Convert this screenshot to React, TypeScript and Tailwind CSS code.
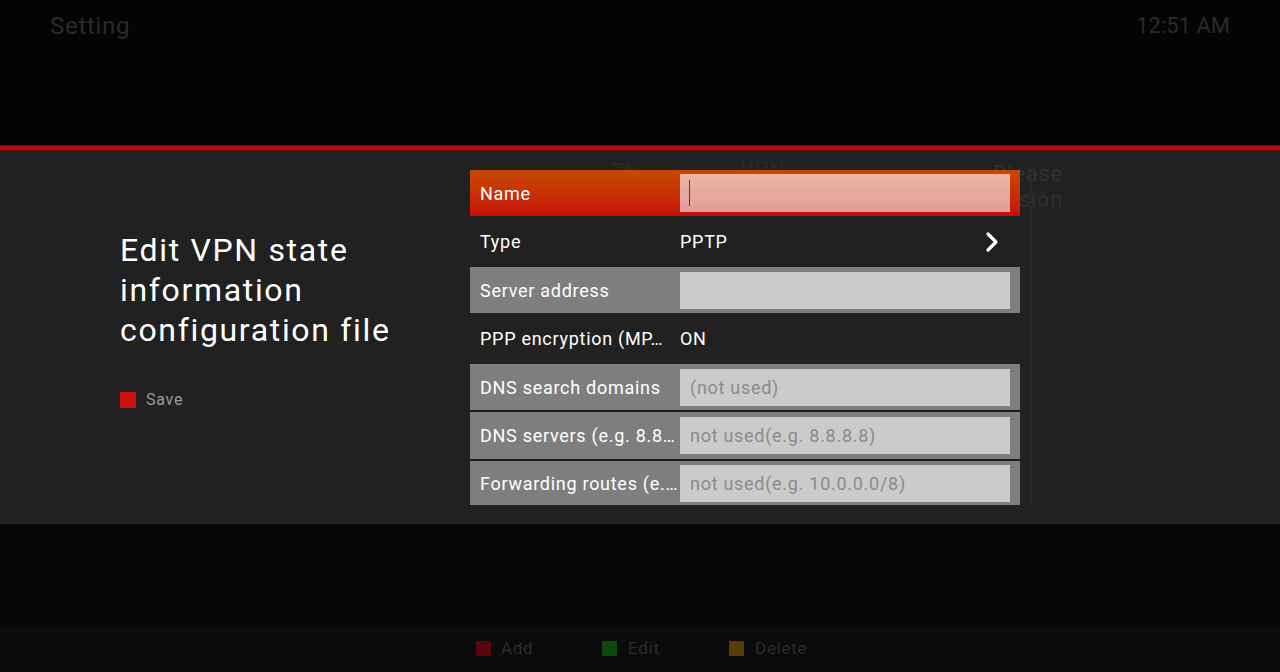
import React from 'react';

type Row = { label: string; kind: 'input' | 'text' | 'select'; value?: string; placeholder?: string; h: string; sep?: boolean };

const ROWS: Row[] = [
  { label: 'Type', kind: 'select', value: 'PPTP', h: 'h-[51px]' },
  { label: 'Server address', kind: 'input', h: 'h-[46px]' },
  { label: 'PPP encryption (MP…', kind: 'text', value: 'ON', h: 'h-[51px]' },
  { label: 'DNS search domains', kind: 'input', placeholder: '(not used)', h: 'h-[48px]', sep: true },
  { label: 'DNS servers (e.g. 8.8…', kind: 'input', placeholder: 'not used(e.g. 8.8.8.8)', h: 'h-[49px]', sep: true },
  { label: 'Forwarding routes (e.…', kind: 'input', placeholder: 'not used(e.g. 10.0.0.0/8)', h: 'h-[44px]' },
];

function Chevron() {
  return (
    <svg width="16" height="22" viewBox="0 0 16 22" className="mr-[20px]">
      <polyline points="4,3 12,11 4,19" fill="none" stroke="#ffffff" strokeWidth="3.2" strokeLinecap="round" strokeLinejoin="round" />
    </svg>
  );
}

function FormRow({ r }: { r: Row }) {
  if (r.kind === 'input') {
    return (
      <div className={`${r.h} bg-[#7e7e7e] flex items-center ${r.sep ? 'border-b-2 border-[#1b1b1b]' : ''}`}>
        <div className="w-[210px] pl-[10px] text-[18px] text-white whitespace-nowrap overflow-hidden">{r.label}</div>
        <div className="w-[330px] h-[37px] bg-[#cbcbcb] flex items-center px-[10px] text-[18px] text-[#8c8c8c]">
          {r.placeholder}
        </div>
      </div>
    );
  }
  return (
    <div className={`${r.h} flex items-center`}>
      <div className="w-[210px] pl-[10px] text-[18px] text-white whitespace-nowrap overflow-hidden">{r.label}</div>
      <div className="flex-1 text-[18px] text-white">{r.value}</div>
      {r.kind === 'select' && <Chevron />}
    </div>
  );
}

export default function App() {
  return (
    <div
      className="w-[1280px] h-[672px] bg-[#040406] flex flex-col overflow-hidden tracking-[0.045em]"
      style={{ fontFamily: 'Roboto, "Noto Sans", sans-serif' }}
    >
      {/* header */}
      <div className="h-[145px] flex justify-between px-[50px] pt-[8px] text-[#2a2a2a]">
        <span className="text-[24px]">Setting</span>
        <span className="text-[22px] tracking-normal pt-[1px]">12:51 AM</span>
      </div>
      <div className="h-[6px] bg-[#b30d0d] border-y border-[#6a0606]" />

      {/* dialog */}
      <div className="h-[373px] bg-[#212121] flex relative">
        {/* faint text from the screen behind */}
        <div className="absolute top-[10px] left-[612px] text-[22px] leading-[22px] text-[#2b2b2b]">Th</div>
        <div className="absolute top-[8px] left-[740px] text-[22px] leading-[22px] text-[#2b2b2b]">VPN</div>
        <div className="absolute top-[12px] right-[217px] text-[22px] leading-[22px] text-[#2f2f2f]">Please</div>
        <div className="absolute top-[38px] right-[217px] text-[22px] leading-[22px] text-[#2f2f2f]">sion</div>

        <div className="w-[470px] pl-[120px] pt-[79px]">
          <h1 className="text-[32px] leading-[40px] text-white tracking-[0.052em]">
            Edit VPN state
            <br />
            information
            <br />
            configuration file
          </h1>
          <div className="mt-[38px] flex items-center gap-[10px] text-[16px] leading-[24px] text-[#9b9b9b]">
            <span className="w-[16px] h-[16px] bg-[#cc1010]" />
            Save
          </div>
        </div>

        <div className="relative z-10 pt-[19px] flex">
          <div className="w-[550px] flex flex-col">
            <div className="h-[46px] flex items-center bg-gradient-to-b from-[#c84800] to-[#c40a0a]">
              <div className="w-[210px] pl-[10px] text-[18px] text-white">Name</div>
              <div className="w-[330px] h-[38px] bg-gradient-to-b from-[#eab7a0] to-[#e49c9c] flex items-center pl-[9px]">
                <span className="w-[1px] h-[26px] bg-[#5a3a3a]" />
              </div>
            </div>
            {ROWS.map((r) => (
              <FormRow key={r.label} r={r} />
            ))}
          </div>
          <div className="ml-[10px] w-[1px] h-[335px] bg-[#2e2e2e]" />
        </div>
      </div>

      <div className="h-[101px] bg-[#050508] border-t border-[#0c0c0c]" />

      {/* bottom legend */}
      <div className="h-[47px] bg-[#0b0b0d] flex items-center pl-[476px] text-[17px] text-[#2a2a2a]">
        <span className="w-[15px] h-[15px] bg-[#580606]" />
        <span className="ml-[10px] w-[101px]">Add</span>
        <span className="w-[15px] h-[15px] bg-[#0a4a0a]" />
        <span className="ml-[11px] w-[101px]">Edit</span>
        <span className="w-[15px] h-[15px] bg-[#5c3c06]" />
        <span className="ml-[11px]">Delete</span>
      </div>
    </div>
  );
}
